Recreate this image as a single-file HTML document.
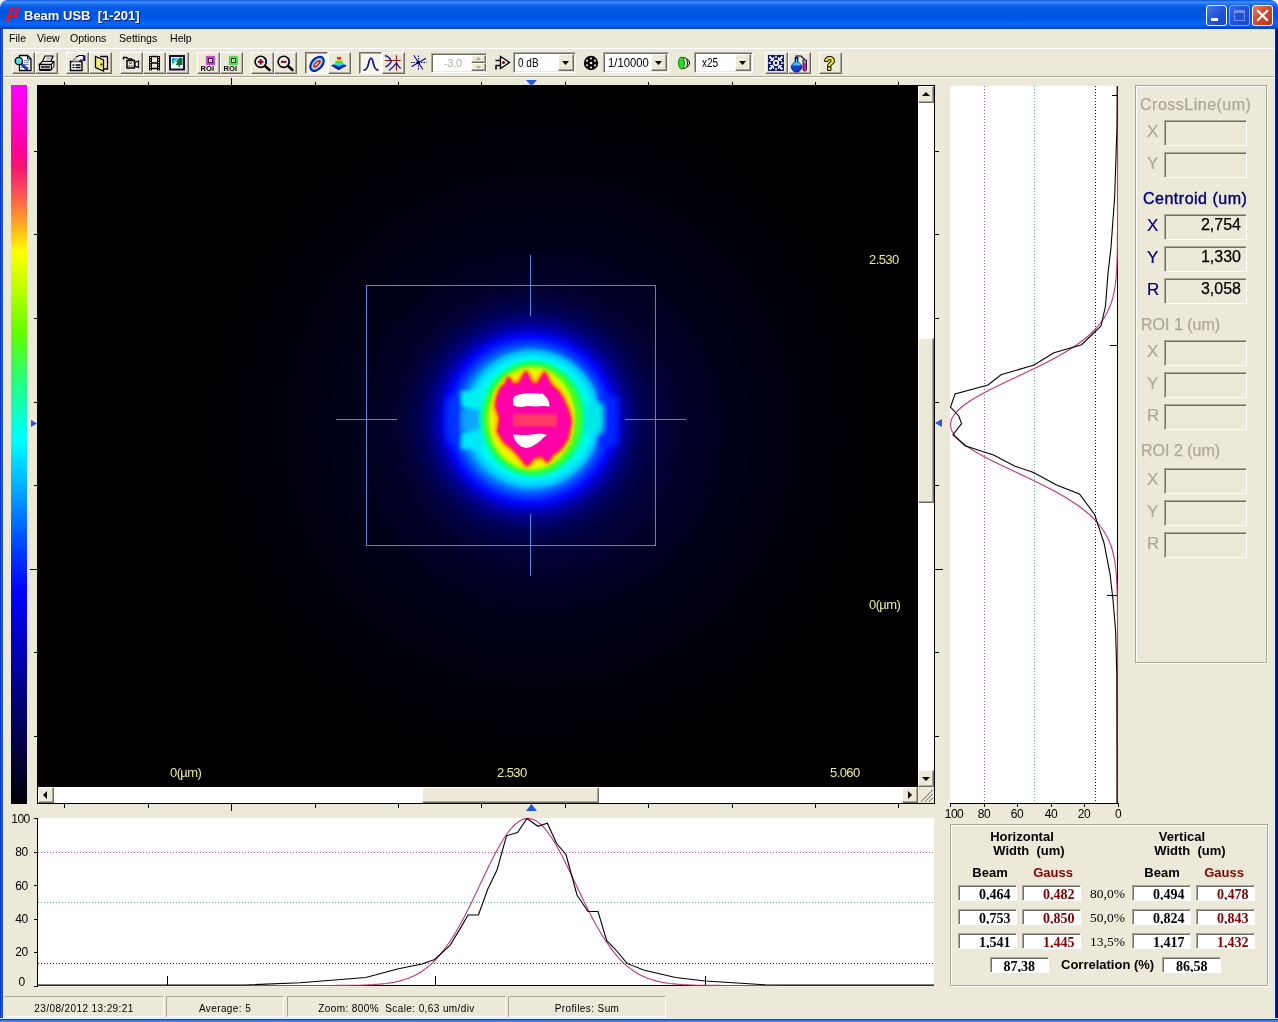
<!DOCTYPE html><html><head><meta charset="utf-8"><title>Beam USB</title><style>*{box-sizing:border-box;margin:0;padding:0}
html,body{width:1278px;height:1022px;overflow:hidden;background:#eef2fa;font-family:"Liberation Sans",sans-serif;}
#win{position:absolute;left:0;top:0;width:1278px;height:1022px;background:#ECE9D8;overflow:hidden;border-radius:7px 7px 0 0;will-change:transform;-webkit-font-smoothing:antialiased}
.abs{position:absolute}
#title{position:absolute;left:0;top:0;width:1278px;height:29px;background:linear-gradient(#0a55d8 0,#2a7cf5 5%,#3a8cff 9%,#1a6cf0 15%,#055ae8 25%,#0055e0 45%,#0058e6 65%,#0366fa 80%,#0362f2 88%,#0048c8 95%,#003ab0 100%);border-radius:7px 7px 0 0}
#title .t{position:absolute;left:24px;top:9px;color:#fff;font-weight:bold;font-size:13px;text-shadow:1px 1px 0 #0a1f80;white-space:pre;line-height:1}
.lb{position:absolute;left:0;top:29px;width:4px;height:993px;background:linear-gradient(90deg,#0034c8 0,#0034c8 25%,#2a60d8 25%,#2a60d8 50%,#1c4ca0 50%,#1c4ca0 75%,#d8ecff 75%)}
.rb{position:absolute;left:1274px;top:29px;width:4px;height:993px;background:linear-gradient(90deg,#e4f0ff 0,#e4f0ff 25%,#0c2080 25%,#0c2080 50%,#021690 50%)}
.bb{position:absolute;left:0;top:1018px;width:1278px;height:4px;background:linear-gradient(#dcf0ff 0,#dcf0ff 25%,#1c4890 25%,#1c4890 50%,#3474dc 50%,#3474dc 75%,#4488e8 75%)}
.menu{position:absolute;top:33px;font-size:11px;color:#000;line-height:1;white-space:pre}
.tb{position:absolute;top:52px;width:23px;height:22px;border:1px solid;border-color:#fff #716f64 #716f64 #fff;box-shadow:inset -1px -1px 0 #aca899;background:#ECE9D8}
.tb.dn{border-color:#716f64 #fff #fff #716f64;box-shadow:inset 1px 1px 0 #aca899;background:#f7f6ef}
.tb svg,.ic svg{position:absolute;left:0;top:0}
.ic{position:absolute;top:52px;width:23px;height:22px}
.sunk{position:absolute;border:1px solid;border-color:#aca899 #fff #fff #aca899;box-shadow:inset 1px 1px 0 #716f64, inset -1px -1px 0 #ece9d8;background:#fff}
.sbtn{position:absolute;border:1px solid;border-color:#fff #716f64 #716f64 #fff;box-shadow:inset -1px -1px 0 #aca899;background:#ECE9D8}
.txt{position:absolute;white-space:pre;line-height:1}
.etch{position:absolute;border:1px solid #aca899;box-shadow:1px 1px 0 #fff, inset 1px 1px 0 #fff}
.ibox{position:absolute;left:1164px;width:83px;height:26px;border:1px solid;border-color:#aca899 #fff #fff #aca899;box-shadow:inset 1px 1px 0 #716f64;background:#ECE9D8;font-size:16px;text-align:right;padding-right:5px;line-height:20px;color:#000;-webkit-text-stroke:.25px #000}
.sp{position:absolute;top:996px;height:21px;border:1px solid;border-color:#aca899 #fff #fff #aca899}
.vb{position:absolute;height:16px;width:59px;border:1px solid;border-color:#aca899 #fff #fff #aca899;box-shadow:inset 1px 1px 0 #716f64;background:#fff;font-family:"Liberation Serif",serif;font-weight:bold;font-size:14px;text-align:right;padding-right:5.5px;line-height:18px;overflow:hidden;color:#000}
.vb.g{color:#800000}
.lab{position:absolute;font-weight:bold;font-size:13px;line-height:1;white-space:pre;color:#000}
.ax{position:absolute;font-size:12px;line-height:1;white-space:pre;color:#000;letter-spacing:-0.5px}
.yl{position:absolute;font-size:13px;line-height:1;white-space:pre;color:#ecec9c;letter-spacing:-0.6px}
</style></head><body><div id="win">
<div id="title"><div class="txt" style="left:8px;top:0px;color:#e8142c;-webkit-text-stroke:.4px #e8142c;font-family:'Liberation Serif',serif;font-style:italic;font-weight:bold;font-size:21px;transform:skewX(-8deg)">µ</div><div class="t">Beam USB  [1-201]</div><div class="abs" style="left:1206px;top:5px;width:21px;height:21px;border:1px solid #fff;border-radius:3px;background:linear-gradient(135deg,#4a7ef0 0,#2456dc 45%,#1a46c8 100%)"><div class="abs" style="left:4px;top:12px;width:7px;height:3px;background:#fff"></div></div><div class="abs" style="left:1229px;top:5px;width:21px;height:21px;border:1px solid #7fa5f0;border-radius:3px;background:linear-gradient(135deg,#3a6ee8 0,#2050d8 50%,#1a48cc 100%)"><div class="abs" style="left:4px;top:4px;width:11px;height:11px;border:1px solid #6b8fe8;border-top:3px solid #6b8fe8"></div></div><div class="abs" style="left:1252px;top:5px;width:21px;height:21px;border:1px solid #fff;border-radius:3px;background:linear-gradient(135deg,#e8805c 0,#d8482a 45%,#c03418 100%)"><svg width="19" height="19" class="abs" style="left:0;top:0"><path d="M5 5 L14 14 M14 5 L5 14" stroke="#fff" stroke-width="2.2" stroke-linecap="square"/></svg></div></div><div class="lb"></div><div class="rb"></div><div class="bb"></div><div class="abs" style="left:4px;top:29px;width:1270px;height:1px;background:#e4ecf8"></div><div class="menu" style="left:8.5px;transform:scaleX(.96);transform-origin:0 0">File</div><div class="menu" style="left:36.8px;transform:scaleX(.96);transform-origin:0 0">View</div><div class="menu" style="left:70.4px;transform:scaleX(.96);transform-origin:0 0">Options</div><div class="menu" style="left:119.3px;transform:scaleX(.96);transform-origin:0 0">Settings</div><div class="menu" style="left:170px;transform:scaleX(.96);transform-origin:0 0">Help</div><div class="abs" style="left:4px;top:48px;width:1270px;height:1px;background:#fff"></div><div class="abs" style="left:4px;top:76px;width:1270px;height:1px;background:#aca899"></div><div class="abs" style="left:4px;top:77px;width:1270px;height:1px;background:#fff"></div>
<div class="tb" style="left:12px"><svg width="21" height="20" viewBox="0 0 21 20"><path d="M6.500 2.500h8l3.500 3.500v11.500h-11.500z" fill="#fff" stroke="#000" stroke-width="1.300"/><path d="M14.500 2.500v3.500h3.500" fill="none" stroke="#000"/><path d="M11 7.500h5M11 9.500h5M11 11.500h5M8 14.500h8" stroke="#8090d8"/><path d="M8 10.500l6.500 6" stroke="#0a2090" stroke-width="3"/><path d="M8.500 10.500l6 5.500" stroke="#4878e8" stroke-width="1"/><circle cx="5.800" cy="8" r="3.700" fill="#48e0e8" stroke="#000" stroke-width="1.200"/></svg></div><div class="tb" style="left:35px"><svg width="21" height="20" viewBox="0 0 21 20"><path d="M6.500 8.500l2.500-5.500h8l-2 5.500" fill="#fff" stroke="#000" stroke-width="1.200"/><path d="M10 5h5.500M9.500 7h5.500" stroke="#444" stroke-width=".6"/><path d="M3.500 11.500l3-3h11l-2 3z" fill="#fff" stroke="#000" stroke-width="1.200"/><path d="M3.500 11.500h12v5h-12z" fill="#fff" stroke="#000" stroke-width="1.300"/><path d="M15.500 11.500l2.500-3v5l-2.500 3z" fill="#e0e0d8" stroke="#000" stroke-width="1"/><path d="M5 14h9" stroke="#000" stroke-width="1.600"/><path d="M3.500 17.500h11" stroke="#000" stroke-width="1"/></svg></div><div class="tb" style="left:66px"><svg width="21" height="20" viewBox="0 0 21 20"><path d="M3.500 8.500h11.500v9h-11.500z" fill="#fff" stroke="#000" stroke-width="1.400"/><path d="M5.500 12h2M8.500 12h5M5.500 14.500h2M8.500 14.500h5" stroke="#000" stroke-width="1.300"/><path d="M5 8.500l4-4.500 4.500 4.500" fill="#c8c8c0" stroke="#000" stroke-dasharray="1 1"/><path d="M9 4l3.500-1.500h4v4.500h-3l-1.500 1.500" fill="#fff" stroke="#000" stroke-width="1.200"/><rect x="16" y="2.500" width="2.500" height="5.500" fill="#10188c"/></svg></div><div class="tb" style="left:89px"><svg width="21" height="20" viewBox="0 0 21 20"><path d="M10 3.500h7.500v12.500h-4" fill="#ece9d8" stroke="#000" stroke-width="1.300"/><path d="M5.500 3.500l8 3.500v11l-8-3.500z" fill="#f4ec78" stroke="#000" stroke-width="1.300"/><rect x="10.500" y="10.500" width="1.800" height="1.800" fill="#000"/></svg></div><div class="tb" style="left:120px"><svg width="21" height="20" viewBox="0 0 21 20"><path d="M6 7.500h7.500v7.500h-7.500z" fill="#ece9d8" stroke="#000" stroke-width="1.500"/><path d="M14 9.500l3.500-1.500v6.500l-3.500-1.500z" fill="#fff" stroke="#000" stroke-width="1.300"/><path d="M2.500 6.500v-2h3l2 1.500h3l2 1.500" stroke="#000" stroke-width="1.400" fill="none"/><path d="M7.500 13h4.500" stroke="#000" stroke-dasharray="1.500 1"/><path d="M8 9.500l1.500 1 1.500-1" stroke="#000" fill="none"/></svg></div><div class="tb" style="left:143px"><svg width="21" height="20" viewBox="0 0 21 20"><path d="M6.500 3v14.500M14.500 3v14.500" stroke="#000" stroke-width="3"/><path d="M6.500 3.500v14" stroke="#ece9d8" stroke-width="1" stroke-dasharray="1 1.500" stroke-dashoffset="-.5"/><path d="M14.500 3.500v14" stroke="#ece9d8" stroke-width="1" stroke-dasharray="1 1.500" stroke-dashoffset="-.5"/><path d="M7 3.500h7M7 10h7M7 15.500h7" stroke="#000" stroke-width="1.300"/></svg></div><div class="tb" style="left:166px"><svg width="21" height="20" viewBox="0 0 21 20"><rect x="2" y="2" width="16" height="15.500" fill="#1c0838"/><rect x="4" y="4" width="12" height="11.500" fill="#fff"/><rect x="5" y="5" width="10" height="9" fill="#fff"/><path d="M5 5h7l-7 7z" fill="#30c8e0"/><path d="M5 5l0 5 3-5z" fill="#1890b0"/><path d="M12.500 4.500l-3.500 4.500h1.500l-2 3h3v2h1.500v-2h2.500v-7z" fill="#0a7030"/></svg></div><div class="tb" style="left:197px"><svg width="21" height="20" viewBox="0 0 21 20"><rect x="8.500" y="3.500" width="8" height="8" fill="#d030d8" stroke="#b018c0" stroke-width="1.400" stroke-dasharray="1 1"/><rect x="9" y="4" width="7" height="7" fill="#d030d8"/><rect x="10.500" y="5.500" width="4" height="4" fill="#f8f0c0" stroke="#500858" stroke-width="1"/><rect x="12" y="7" width="1" height="1" fill="#806000"/><text x="2.500" y="17.700" font-family="Liberation Sans,sans-serif" font-weight="bold" font-size="6.800" fill="#000" textLength="13.500" lengthAdjust="spacingAndGlyphs">ROI</text></svg></div><div class="tb" style="left:220px"><svg width="21" height="20" viewBox="0 0 21 20"><rect x="8.500" y="3.500" width="8" height="8" fill="#40e848" stroke="#20c020" stroke-width="1.400" stroke-dasharray="1 1"/><rect x="9" y="4" width="7" height="7" fill="#40e848"/><rect x="10.500" y="5.500" width="4" height="4" fill="#f8f0c0" stroke="#104010" stroke-width="1"/><rect x="12" y="7" width="1" height="1" fill="#806000"/><text x="2.500" y="17.700" font-family="Liberation Sans,sans-serif" font-weight="bold" font-size="6.800" fill="#000" textLength="13.500" lengthAdjust="spacingAndGlyphs">ROI</text></svg></div><div class="tb" style="left:251px"><svg width="21" height="20" viewBox="0 0 21 20"><circle cx="8.700" cy="8.800" r="5.600" fill="#f4ece4" stroke="#000" stroke-width="1.600"/><path d="M12.300 4.800a5.600 5.600 0 0 1 1.600 6" fill="none" stroke="#101070" stroke-width="1.600"/><path d="M6 8.800h5.400" stroke="#880010" stroke-width="2"/><path d="M8.700 6.100v5.400" stroke="#880010" stroke-width="2"/><path d="M13 13l4.500 4" stroke="#000" stroke-width="2.600" stroke-linecap="round"/></svg></div><div class="tb" style="left:274px"><svg width="21" height="20" viewBox="0 0 21 20"><circle cx="8.700" cy="8.800" r="5.600" fill="#f4ece4" stroke="#000" stroke-width="1.600"/><path d="M12.300 4.800a5.600 5.600 0 0 1 1.600 6" fill="none" stroke="#101070" stroke-width="1.600"/><path d="M6 8.800h5.400" stroke="#880010" stroke-width="2"/><path d="M13 13l4.500 4" stroke="#000" stroke-width="2.600" stroke-linecap="round"/></svg></div><div class="tb dn" style="left:305px"><svg width="21" height="20" viewBox="0 0 21 20"><g transform="rotate(-48 11 10.800)"><ellipse cx="11" cy="10.800" rx="9.300" ry="6.300" fill="#0c20b0"/><ellipse cx="11" cy="10.800" rx="7.200" ry="4.300" fill="#40c8e8"/><ellipse cx="11" cy="10.800" rx="6" ry="3.200" fill="#f0f0e0"/><ellipse cx="11" cy="10.800" rx="5" ry="2.300" fill="#d81828"/><ellipse cx="11" cy="10.800" rx="2.800" ry=".7" fill="#f8e8e0"/></g></svg></div><div class="tb" style="left:328px"><svg width="21" height="20" viewBox="0 0 21 20"><path d="M2 12.500l8-3 8 3-8.500 4.700z" fill="#0c1c90"/><path d="M4 12.200l6-2.200 6 2.200-6 2.300z" fill="#2048e8"/><path d="M5 11.500l1-2h8l1 2-5 1.800z" fill="#28d8d8"/><path d="M6 9.500l1-2h6l1 2-4 1z" fill="#40e040"/><path d="M7 7.500l1-1.500h4l1 1.500-3 .8z" fill="#f0e828"/><path d="M8 6v-2.500l2 1 2-1v2.500l-2 .7z" fill="#e82028"/></svg></div><div class="tb dn" style="left:359px"><svg width="21" height="20" viewBox="0 0 21 20"><path d="M3.500 17.200c3-.5 4-2 5-6.500s1.500-5.500 2.500-5.500 1.500 1 2.500 5.500 2 6 5 6.500" fill="none" stroke="#0a1488" stroke-width="1.700"/></svg></div><div class="tb" style="left:382px"><svg width="21" height="20" viewBox="0 0 21 20"><path d="M1.800 7.500h16M13.400 2.200v15.500" stroke="#a81010" stroke-width="1.100"/><path d="M2 2.500C6 4 8 6 8 8.500C8 10.500 5 12.500 2.500 14M6 17.500C9 15 12 12.500 13.400 10C14.500 12 16 14 17.700 15.500" fill="none" stroke="#1420a0" stroke-width="1.500"/></svg></div><div class="tb" style="left:765px"><svg width="21" height="20" viewBox="0 0 21 20"><rect x="2" y="2" width="16" height="16" fill="#0c1478"/><g stroke="#fff" fill="none"><circle cx="10" cy="10" r="2.300" stroke-width="1.700"/><path d="M3.500 3.500l3.800 3.800M16.500 3.500l-3.800 3.800M3.500 16.500l3.800-3.800M16.500 16.500l-3.800-3.800" stroke-width="1.800"/><path d="M4 7.500h2.500M7.500 4v2.500M16 7.500h-2.500M12.500 4v2.500M4 12.500h2.500M7.500 16v-2.500M16 12.500h-2.500M12.500 16v-2.500" stroke-width="1.200"/><path d="M10 2.500v2.500M10 15v2.500M2.500 10h2.500M15 10h2.500" stroke-width="1.400"/></g></svg></div><div class="tb" style="left:788px"><svg width="21" height="20" viewBox="0 0 21 20"><path d="M6.300 4v5.200a5 5 0 1 0 2.400 0v-5.200z" fill="#1440d0" stroke="#081060" stroke-width="1"/><path d="M3 12.500a4.600 4.600 0 0 1 3.300-3.300v-3.200h2.400v3.200a4.600 4.600 0 0 1 3.300 3.300z" fill="#30c8f0"/><path d="M6.300 4v5.200M8.700 4v5.200" stroke="#081060" stroke-width="1"/><path d="M6.500 3h5.500l4 4" fill="none" stroke="#000" stroke-width="1.200"/><path d="M14 7h3.500v9.300a1.750 1.750 0 0 1-3.500 0z" fill="#d020b0" stroke="#300838" stroke-width="1"/><path d="M14.500 7.500h2.500v2.500h-2.500z" fill="#9090c0"/></svg></div><div class="tb" style="left:819px"><svg width="21" height="20" viewBox="0 0 21 20"><text x="9.500" y="16.500" font-family="Liberation Sans,sans-serif" font-weight="bold" font-size="17.500" text-anchor="middle" fill="#f4ec30" stroke="#000" stroke-width="2" stroke-linejoin="round" paint-order="stroke">?</text></svg></div><div class="ic" style="left:408px"><div class="abs" style="left:1px;top:1px"><svg width="21" height="20" viewBox="0 0 21 20"><path d="M2 9.500h15.500M9.500 2.500v14.500" stroke="#080878" stroke-width="1.100" stroke-dasharray="1.500 1"/><path d="M4.800 2.300l9 14.200M17 5.200l-14.600 8.500" stroke="#080878" stroke-width="1.100"/><rect x="8" y="8" width="3" height="3" fill="#080860"/></svg></div></div><div class="ic" style="left:492px"><div class="abs" style="left:1px;top:1px"><svg width="21" height="20" viewBox="0 0 21 20"><path d="M7.500 3.500v12l9-6z" fill="#fff" stroke="#000" stroke-width="1.400"/><circle cx="10.500" cy="9.500" r="1.600" fill="#900010"/><path d="M2.500 7.500h5M2.500 12.500h5M3 12.500v4" stroke="#000" stroke-width="1.600"/></svg></div></div><div class="ic" style="left:580px"><div class="abs" style="left:1px;top:1px"><svg width="21" height="20" viewBox="0 0 21 20"><circle cx="10" cy="10" r="7.200" fill="#000"/><g fill="#ece9d8"><circle cx="10" cy="10" r="1.300"/><circle cx="10" cy="5.500" r="1.100"/><circle cx="10" cy="14.500" r="1.100"/><circle cx="6" cy="7.700" r="1.100"/><circle cx="14" cy="7.700" r="1.100"/><circle cx="6" cy="12.300" r="1.100"/><circle cx="14" cy="12.300" r="1.100"/></g></svg></div></div><div class="ic" style="left:673px"><div class="abs" style="left:1px;top:1px"><svg width="21" height="20" viewBox="0 0 21 20"><path d="M8 4.500c5 0 7.500 3 7.500 5.500s-2.500 5.500-7.500 5.500" fill="#e8e8d8" stroke="#000"/><ellipse cx="7.500" cy="10" rx="3" ry="6" fill="#28d828" stroke="#108010"/><path d="M12.500 6.500c1.500 2 1.500 5 0 7" fill="none" stroke="#000"/></svg></div></div><div class="sunk" style="left:431px;top:53px;width:56px;height:20px"></div><div class="txt" style="left:444px;top:58px;font-size:11px;letter-spacing:-.3px;color:#b4b0a0">-3,0</div><div class="sbtn" style="left:471px;top:55px;width:15px;height:8px"></div><div class="sbtn" style="left:471px;top:63px;width:15px;height:8px"></div><svg class="abs" style="left:476px;top:57px" width="5" height="3"><path d="M0 3l2.500-3 2.500 3z" fill="#aca899"/></svg><svg class="abs" style="left:476px;top:66px" width="5" height="3"><path d="M0 0h5l-2.500 3z" fill="#aca899"/></svg><div class="sunk" style="left:513px;top:52px;width:63px;height:21px"></div><div class="txt" style="left:518px;top:57px;font-size:12.500px;color:#000;transform:scaleX(0.8);transform-origin:0 0">0 dB</div><div class="sbtn" style="left:558px;top:54px;width:16px;height:17px"></div><svg class="abs" style="left:562px;top:61px" width="7" height="4"><path d="M0 0h7l-3.500 4z" fill="#000"/></svg><div class="sunk" style="left:603px;top:52px;width:66px;height:21px"></div><div class="txt" style="left:608px;top:57px;font-size:12.500px;color:#000;transform:scaleX(0.9);transform-origin:0 0">1/10000</div><div class="sbtn" style="left:651px;top:54px;width:16px;height:17px"></div><svg class="abs" style="left:655px;top:61px" width="7" height="4"><path d="M0 0h7l-3.500 4z" fill="#000"/></svg><div class="sunk" style="left:694px;top:52px;width:59px;height:21px"></div><div class="txt" style="left:702px;top:57px;font-size:12.500px;color:#000;transform:scaleX(0.8);transform-origin:0 0">x25</div><div class="sbtn" style="left:735px;top:54px;width:16px;height:17px"></div><svg class="abs" style="left:739px;top:61px" width="7" height="4"><path d="M0 0h7l-3.500 4z" fill="#000"/></svg>
<div class="abs" style="left:11px;top:85px;width:16px;height:719px;background:linear-gradient(#ff00ff 0.00%,#ff00d0 4.87%,#ff0098 9.04%,#f41870 11.54%,#fa5058 15.02%,#ffa028 18.92%,#ffff00 23.23%,#b8ff00 28.65%,#60ff00 34.63%,#28ff78 40.89%,#00fff0 48.26%,#00ffff 49.37%,#00c0ff 54.38%,#0080ff 59.39%,#0040ff 64.53%,#0000ff 70.51%,#0000c0 77.61%,#000080 84.70%,#000040 92.21%,#00000c 99.30%,#000008 100.00%)"></div><div class="abs" style="left:37px;top:85px;width:898px;height:719px;background:#000"></div><svg class="abs" style="left:38px;top:86px" width="880" height="701" viewBox="0 0 880 701"><defs><radialGradient id="halo" cx="502" cy="344" r="360" gradientUnits="userSpaceOnUse"><stop offset="0" stop-color="#000060"/><stop offset=".3" stop-color="#000040"/><stop offset=".4" stop-color="#00002a"/><stop offset=".52" stop-color="#00001a"/><stop offset=".7" stop-color="#00000e"/><stop offset=".85" stop-color="#000006"/><stop offset="1" stop-color="#000000"/></radialGradient><radialGradient id="beam" cx="492" cy="334" r="140" gradientUnits="userSpaceOnUse"><stop offset="0.0000" stop-color="#00c8ff" stop-opacity="1"/><stop offset="0.4286" stop-color="#00c0ff" stop-opacity="1"/><stop offset="0.4857" stop-color="#0090ff" stop-opacity="1"/><stop offset="0.5429" stop-color="#0040ff" stop-opacity="1"/><stop offset="0.5929" stop-color="#0008ff" stop-opacity="1"/><stop offset="0.6429" stop-color="#0000c0" stop-opacity="1"/><stop offset="0.7000" stop-color="#00008c" stop-opacity="0.95"/><stop offset="0.7714" stop-color="#000064" stop-opacity="0.85"/><stop offset="0.8714" stop-color="#000048" stop-opacity="0.5"/><stop offset="1.0000" stop-color="#000038" stop-opacity="0"/></radialGradient><radialGradient id="gc"><stop offset="0" stop-color="#00ffb0" stop-opacity="1"/><stop offset="0.74" stop-color="#00ffc8" stop-opacity="1"/><stop offset="0.84" stop-color="#00f4f8" stop-opacity="1"/><stop offset="0.93" stop-color="#00d0ff" stop-opacity="0.8"/><stop offset="1" stop-color="#00a8ff" stop-opacity="0"/></radialGradient><radialGradient id="gg"><stop offset="0" stop-color="#58ff18" stop-opacity="1"/><stop offset="0.86" stop-color="#48ff20" stop-opacity="1"/><stop offset="0.93" stop-color="#10ff70" stop-opacity="0.9"/><stop offset="1" stop-color="#00ffb0" stop-opacity="0"/></radialGradient><radialGradient id="gy"><stop offset="0" stop-color="#ffd800" stop-opacity="1"/><stop offset="0.84" stop-color="#fff000" stop-opacity="1"/><stop offset="0.92" stop-color="#d0ff00" stop-opacity="0.9"/><stop offset="1" stop-color="#80ff10" stop-opacity="0"/></radialGradient><filter id="b2"><feGaussianBlur stdDeviation="2"/></filter><filter id="b1"><feGaussianBlur stdDeviation="1.200"/></filter><filter id="b3"><feGaussianBlur stdDeviation="3"/></filter></defs><rect width="880" height="701" fill="url(#halo)"/><circle cx="492" cy="334" r="140" fill="url(#beam)"/><rect x="408.0" y="312.0" width="24.0" height="44.0" fill="#0030ff" filter="url(#b3)" opacity="0.9"/><rect x="558.0" y="310.0" width="22.0" height="50.0" fill="#0028ff" filter="url(#b3)" opacity="0.9"/><ellipse cx="494.5" cy="333.0" rx="71.0" ry="72.0" fill="url(#gc)" /><rect x="423.0" y="305.0" width="22.0" height="17.0" fill="#00f0f0" filter="url(#b2)" opacity="1"/><rect x="423.0" y="346.0" width="22.0" height="17.0" fill="#00e8f8" filter="url(#b2)" opacity="1"/><rect x="422.0" y="323.0" width="20.0" height="22.0" fill="#10a0ff" filter="url(#b2)" opacity="0.9"/><rect x="544.0" y="317.0" width="22.0" height="30.0" fill="#00e8e8" filter="url(#b3)" opacity="0.95"/><ellipse cx="494.8" cy="332.5" rx="54.0" ry="60.5" fill="url(#gg)" /><ellipse cx="493.5" cy="332.5" rx="46.0" ry="54.0" fill="url(#gy)" /><path d="M459.5 312.3L463.4 302.5L468.3 298.6L470.3 292.7L474.2 298.6L481.0 298.6L487.9 286.8L493.8 298.6L499.6 298.6L506.5 287.8L512.4 299.6L519.2 305.4L525.0 314.2L530.0 326.0L532.0 335.8L529.0 351.4L523.0 361.2L513.3 369.0L509.4 374.9L503.5 369.0L495.7 371.0L488.9 378.8L483.0 371.0L476.1 363.2L466.4 355.3L460.5 345.5L462.5 331.8L458.5 320.1Z" fill="#ff9000" stroke="#ff9000" stroke-width="7" stroke-linejoin="round" filter="url(#b2)"/><path d="M459.5 312.3L463.4 302.5L468.3 298.6L470.3 292.7L474.2 298.6L481.0 298.6L487.9 286.8L493.8 298.6L499.6 298.6L506.5 287.8L512.4 299.6L519.2 305.4L525.0 314.2L530.0 326.0L532.0 335.8L529.0 351.4L523.0 361.2L513.3 369.0L509.4 374.9L503.5 369.0L495.7 371.0L488.9 378.8L483.0 371.0L476.1 363.2L466.4 355.3L460.5 345.5L462.5 331.8L458.5 320.1Z" fill="#ff2050" stroke="#ff2050" stroke-width="3" stroke-linejoin="round" filter="url(#b1)"/><path d="M459.5 312.3L463.4 302.5L468.3 298.6L470.3 292.7L474.2 298.6L481.0 298.6L487.9 286.8L493.8 298.6L499.6 298.6L506.5 287.8L512.4 299.6L519.2 305.4L525.0 314.2L530.0 326.0L532.0 335.8L529.0 351.4L523.0 361.2L513.3 369.0L509.4 374.9L503.5 369.0L495.7 371.0L488.9 378.8L483.0 371.0L476.1 363.2L466.4 355.3L460.5 345.5L462.5 331.8L458.5 320.1Z" fill="#ff00a8" filter="url(#b1)"/><rect x="475.0" y="328.0" width="44.0" height="12.5" fill="#ff3868" filter="url(#b1)" opacity="1"/><path d="M475.0 313.0L477.0 310.0L481.0 308.5L486.0 307.4L493.0 307.2L500.0 307.4L503.0 308.0L504.0 307.0L506.0 309.0L509.0 312.0L511.0 316.0L511.5 320.5L505.0 320.0L498.0 320.5L490.0 320.0L483.0 321.0L478.0 320.5L475.0 318.5Z" fill="#fff"/><path d="M475.0 348.5L482.0 349.0L490.0 349.0L498.0 348.0L503.0 347.5L509.0 349.0L505.0 352.0L502.0 355.0L498.0 358.0L493.0 361.0L488.0 362.0L483.0 360.5L479.0 357.0L476.5 353.0Z" fill="#fff"/><g stroke="#4a88e0" stroke-width="1" fill="none" shape-rendering="crispEdges"><rect x="328.5" y="199.5" width="289" height="260"/><path d="M492.5 169 V230 M492.5 428 V490 M298 333.5 H359 M587 333.5 H648"/></g></svg><div class="yl" style="left:170px;top:766px">0(µm)</div><div class="yl" style="left:497px;top:766px">2.530</div><div class="yl" style="left:830px;top:766px">5.060</div><div class="yl" style="left:869px;top:253px">2.530</div><div class="yl" style="left:869px;top:598px">0(µm)</div><div class="abs" style="left:918px;top:86px;width:16px;height:701px;background:#fff"></div><div class="sbtn" style="left:918px;top:86px;width:16px;height:17px"></div><svg class="abs" style="left:922px;top:92px" width="8" height="4"><path d="M0 4l4-4 4 4z" fill="#000"/></svg><div class="sbtn" style="left:918px;top:770px;width:16px;height:17px"></div><svg class="abs" style="left:922px;top:777px" width="8" height="4"><path d="M0 0h8l-4 4z" fill="#000"/></svg><div class="sbtn" style="left:918px;top:338px;width:16px;height:165px"></div><div class="abs" style="left:38px;top:787px;width:880px;height:16px;background:#fff"></div><div class="sbtn" style="left:38px;top:787px;width:16px;height:16px"></div><svg class="abs" style="left:43px;top:791px" width="4" height="8"><path d="M4 0v8l-4-4z" fill="#000"/></svg><div class="sbtn" style="left:902px;top:787px;width:16px;height:16px"></div><svg class="abs" style="left:908px;top:791px" width="4" height="8"><path d="M0 0v8l4-4z" fill="#000"/></svg><div class="sbtn" style="left:422px;top:787px;width:177px;height:16px"></div><div class="abs" style="left:918px;top:787px;width:16px;height:16px;background:#ECE9D8"></div><svg class="abs" style="left:918px;top:787px" width="16" height="16"><path d="M3 15L15 3M7 15L15 7M11 15L15 11" stroke="#8a887c" stroke-width="1.400"/><path d="M4 15L15 4M8 15L15 8M12 15L15 12" stroke="#fff" stroke-width=".8"/></svg><svg class="abs" style="left:0;top:0;pointer-events:none" width="1278" height="1022"><rect x="64" y="82" width="1" height="3" fill="#000"/><rect x="64" y="804" width="1" height="4" fill="#000"/><rect x="34" y="151" width="3" height="1" fill="#000"/><rect x="935" y="151" width="4" height="1" fill="#000"/><rect x="148" y="82" width="1" height="3" fill="#000"/><rect x="148" y="804" width="1" height="4" fill="#000"/><rect x="34" y="234" width="3" height="1" fill="#000"/><rect x="935" y="234" width="4" height="1" fill="#000"/><rect x="231" y="78" width="1" height="7" fill="#000"/><rect x="231" y="804" width="1" height="7" fill="#000"/><rect x="34" y="318" width="3" height="1" fill="#000"/><rect x="935" y="318" width="4" height="1" fill="#000"/><rect x="315" y="82" width="1" height="3" fill="#000"/><rect x="315" y="804" width="1" height="4" fill="#000"/><rect x="34" y="402" width="3" height="1" fill="#000"/><rect x="935" y="402" width="4" height="1" fill="#000"/><rect x="398" y="82" width="1" height="3" fill="#000"/><rect x="398" y="804" width="1" height="4" fill="#000"/><rect x="34" y="485" width="3" height="1" fill="#000"/><rect x="935" y="485" width="4" height="1" fill="#000"/><rect x="481" y="82" width="1" height="3" fill="#000"/><rect x="481" y="804" width="1" height="4" fill="#000"/><rect x="30" y="569" width="7" height="1" fill="#000"/><rect x="935" y="569" width="8" height="1" fill="#000"/><rect x="565" y="82" width="1" height="3" fill="#000"/><rect x="565" y="804" width="1" height="4" fill="#000"/><rect x="34" y="652" width="3" height="1" fill="#000"/><rect x="935" y="652" width="4" height="1" fill="#000"/><rect x="648" y="82" width="1" height="3" fill="#000"/><rect x="648" y="804" width="1" height="4" fill="#000"/><rect x="34" y="736" width="3" height="1" fill="#000"/><rect x="935" y="736" width="4" height="1" fill="#000"/><rect x="732" y="82" width="1" height="3" fill="#000"/><rect x="732" y="804" width="1" height="4" fill="#000"/><rect x="815" y="82" width="1" height="3" fill="#000"/><rect x="815" y="804" width="1" height="4" fill="#000"/><rect x="898" y="82" width="1" height="3" fill="#000"/><rect x="898" y="804" width="1" height="4" fill="#000"/><path d="M526 80h11l-5.500 6z" fill="#2858d8"/><path d="M526 811h11l-5.500 -7z" fill="#2858d8"/><path d="M31 420v7l6 -3.500z" fill="#2858d8"/><path d="M942 419v8l-7 -4z" fill="#2858d8"/></svg>
<div class="abs" style="left:950px;top:86px;width:168px;height:717px;background:#fff"></div><svg class="abs" style="left:0;top:0" width="1278" height="1022"><path d="M984.5 86V803" stroke="#b050a0" stroke-width="1" stroke-dasharray="1 2" shape-rendering="crispEdges"/><path d="M1034.5 86V803" stroke="#58b078" stroke-width="1" stroke-dasharray="1 2" shape-rendering="crispEdges"/><path d="M1095.5 86V803" stroke="#202020" stroke-width="1" stroke-dasharray="1 2" shape-rendering="crispEdges"/><path d="M1117.500 86V803M950 803.500H1118" stroke="#000" stroke-width="1" shape-rendering="crispEdges"/><path d="M1112 95.500h6M1110 345.500h8M1107 595.500h11" stroke="#000" shape-rendering="crispEdges"/><path d="M950.5 803v4" stroke="#000" shape-rendering="crispEdges"/><path d="M984.5 803v4" stroke="#000" shape-rendering="crispEdges"/><path d="M1017.5 803v4" stroke="#000" shape-rendering="crispEdges"/><path d="M1051.5 803v4" stroke="#000" shape-rendering="crispEdges"/><path d="M1084.5 803v4" stroke="#000" shape-rendering="crispEdges"/><path d="M1118.5 803v4" stroke="#000" shape-rendering="crispEdges"/><path d="M1117.5 86.0L1117.5 88.0L1117.5 90.0L1117.5 92.0L1117.5 94.0L1117.5 96.0L1117.5 98.0L1117.5 100.0L1117.5 102.0L1117.5 104.0L1117.5 106.0L1117.5 108.0L1117.5 110.0L1117.5 112.0L1117.5 114.0L1117.5 116.0L1117.5 118.0L1117.5 120.0L1117.5 122.0L1117.5 124.0L1117.5 126.0L1117.5 128.0L1117.5 130.0L1117.5 132.0L1117.5 134.0L1117.5 136.0L1117.5 138.0L1117.5 140.0L1117.5 142.0L1117.5 144.0L1117.5 146.0L1117.5 148.0L1117.5 150.0L1117.5 152.0L1117.5 154.0L1117.5 156.0L1117.5 158.0L1117.5 160.0L1117.5 162.0L1117.5 164.0L1117.5 166.0L1117.5 168.0L1117.5 170.0L1117.5 172.0L1117.5 174.0L1117.5 176.0L1117.5 178.0L1117.5 180.0L1117.5 182.0L1117.5 184.0L1117.5 186.0L1117.5 188.0L1117.5 190.0L1117.5 192.0L1117.5 194.0L1117.5 196.0L1117.5 198.0L1117.5 200.0L1117.5 202.0L1117.5 204.0L1117.5 206.0L1117.5 208.0L1117.5 210.0L1117.5 212.0L1117.5 214.0L1117.5 216.0L1117.5 218.0L1117.5 220.0L1117.5 222.0L1117.5 224.0L1117.5 226.0L1117.5 228.0L1117.5 230.0L1117.5 232.0L1117.4 234.0L1117.4 236.0L1117.4 238.0L1117.4 240.0L1117.4 242.0L1117.4 244.0L1117.4 246.0L1117.3 248.0L1117.3 250.0L1117.3 252.0L1117.2 254.0L1117.2 256.0L1117.1 258.0L1117.1 260.0L1117.0 262.0L1116.9 264.0L1116.9 266.0L1116.8 268.0L1116.7 270.0L1116.5 272.0L1116.4 274.0L1116.2 276.0L1116.1 278.0L1115.9 280.0L1115.6 282.0L1115.4 284.0L1115.1 286.0L1114.8 288.0L1114.5 290.0L1114.1 292.0L1113.6 294.0L1113.2 296.0L1112.7 298.0L1112.1 300.0L1111.5 302.0L1110.8 304.0L1110.0 306.0L1109.2 308.0L1108.3 310.0L1107.4 312.0L1106.3 314.0L1105.2 316.0L1104.0 318.0L1102.6 320.0L1101.2 322.0L1099.7 324.0L1098.0 326.0L1096.3 328.0L1094.4 330.0L1092.4 332.0L1090.3 334.0L1088.1 336.0L1085.7 338.0L1083.2 340.0L1080.6 342.0L1077.8 344.0L1074.9 346.0L1071.9 348.0L1068.8 350.0L1065.5 352.0L1062.1 354.0L1058.6 356.0L1054.9 358.0L1051.2 360.0L1047.4 362.0L1043.4 364.0L1039.4 366.0L1035.4 368.0L1031.2 370.0L1027.0 372.0L1022.8 374.0L1018.5 376.0L1014.3 378.0L1010.0 380.0L1005.8 382.0L1001.6 384.0L997.5 386.0L993.4 388.0L989.5 390.0L985.6 392.0L981.9 394.0L978.3 396.0L974.8 398.0L971.5 400.0L968.5 402.0L965.6 404.0L962.9 406.0L960.5 408.0L958.3 410.0L956.3 412.0L954.7 414.0L953.3 416.0L952.1 418.0L951.3 420.0L950.8 422.0L950.5 424.0L950.6 426.0L950.9 428.0L951.5 430.0L952.5 432.0L953.7 434.0L955.1 436.0L956.9 438.0L958.9 440.0L961.2 442.0L963.7 444.0L966.4 446.0L969.4 448.0L972.5 450.0L975.8 452.0L979.3 454.0L983.0 456.0L986.7 458.0L990.6 460.0L994.6 462.0L998.7 464.0L1002.9 466.0L1007.1 468.0L1011.3 470.0L1015.6 472.0L1019.8 474.0L1024.1 476.0L1028.3 478.0L1032.5 480.0L1036.6 482.0L1040.6 484.0L1044.6 486.0L1048.5 488.0L1052.3 490.0L1056.0 492.0L1059.6 494.0L1063.1 496.0L1066.5 498.0L1069.7 500.0L1072.8 502.0L1075.8 504.0L1078.7 506.0L1081.4 508.0L1084.0 510.0L1086.4 512.0L1088.8 514.0L1091.0 516.0L1093.0 518.0L1095.0 520.0L1096.8 522.0L1098.5 524.0L1100.2 526.0L1101.6 528.0L1103.0 530.0L1104.3 532.0L1105.5 534.0L1106.6 536.0L1107.7 538.0L1108.6 540.0L1109.5 542.0L1110.3 544.0L1111.0 546.0L1111.7 548.0L1112.3 550.0L1112.8 552.0L1113.3 554.0L1113.8 556.0L1114.2 558.0L1114.6 560.0L1114.9 562.0L1115.2 564.0L1115.5 566.0L1115.7 568.0L1115.9 570.0L1116.1 572.0L1116.3 574.0L1116.4 576.0L1116.6 578.0L1116.7 580.0L1116.8 582.0L1116.9 584.0L1117.0 586.0L1117.0 588.0L1117.1 590.0L1117.2 592.0L1117.2 594.0L1117.2 596.0L1117.3 598.0L1117.3 600.0L1117.3 602.0L1117.4 604.0L1117.4 606.0L1117.4 608.0L1117.4 610.0L1117.4 612.0L1117.4 614.0L1117.4 616.0L1117.5 618.0L1117.5 620.0L1117.5 622.0L1117.5 624.0L1117.5 626.0L1117.5 628.0L1117.5 630.0L1117.5 632.0L1117.5 634.0L1117.5 636.0L1117.5 638.0L1117.5 640.0L1117.5 642.0L1117.5 644.0L1117.5 646.0L1117.5 648.0L1117.5 650.0L1117.5 652.0L1117.5 654.0L1117.5 656.0L1117.5 658.0L1117.5 660.0L1117.5 662.0L1117.5 664.0L1117.5 666.0L1117.5 668.0L1117.5 670.0L1117.5 672.0L1117.5 674.0L1117.5 676.0L1117.5 678.0L1117.5 680.0L1117.5 682.0L1117.5 684.0L1117.5 686.0L1117.5 688.0L1117.5 690.0L1117.5 692.0L1117.5 694.0L1117.5 696.0L1117.5 698.0L1117.5 700.0L1117.5 702.0L1117.5 704.0L1117.5 706.0L1117.5 708.0L1117.5 710.0L1117.5 712.0L1117.5 714.0L1117.5 716.0L1117.5 718.0L1117.5 720.0L1117.5 722.0L1117.5 724.0L1117.5 726.0L1117.5 728.0L1117.5 730.0L1117.5 732.0L1117.5 734.0L1117.5 736.0L1117.5 738.0L1117.5 740.0L1117.5 742.0L1117.5 744.0L1117.5 746.0L1117.5 748.0L1117.5 750.0L1117.5 752.0L1117.5 754.0L1117.5 756.0L1117.5 758.0L1117.5 760.0L1117.5 762.0L1117.5 764.0L1117.5 766.0L1117.5 768.0L1117.5 770.0L1117.5 772.0L1117.5 774.0L1117.5 776.0L1117.5 778.0L1117.5 780.0L1117.5 782.0L1117.5 784.0L1117.5 786.0L1117.5 788.0L1117.5 790.0L1117.5 792.0L1117.5 794.0L1117.5 796.0L1117.5 798.0L1117.5 800.0L1117.5 802.0" fill="none" stroke="#b83880" stroke-width="1.100"/><path d="M1117.2 86.0L1117.0 126.0L1114.7 196.0L1111.0 247.5L1108.0 273.0L1105.5 306.0L1101.0 326.0L1081.6 344.7L1054.0 352.8L1034.0 365.0L1001.0 374.8L988.0 385.0L955.0 394.0L950.5 407.0L958.7 416.0L961.6 423.6L953.0 434.6L959.0 440.0L965.0 445.7L993.5 455.0L1014.5 466.0L1033.6 472.4L1056.5 485.0L1079.4 494.0L1094.6 514.4L1104.0 543.0L1110.0 573.6L1113.0 600.0L1115.6 631.0L1116.8 674.7L1117.0 803.0" fill="none" stroke="#000" stroke-width="1.100"/></svg><div class="ax" style="left:939px;top:808px;width:30px;text-align:center">100</div><div class="ax" style="left:969px;top:808px;width:30px;text-align:center">80</div><div class="ax" style="left:1002px;top:808px;width:30px;text-align:center">60</div><div class="ax" style="left:1036px;top:808px;width:30px;text-align:center">40</div><div class="ax" style="left:1069px;top:808px;width:30px;text-align:center">20</div><div class="ax" style="left:1103px;top:808px;width:30px;text-align:center">0</div>
<div class="etch" style="left:1135px;top:85px;width:132px;height:578px"></div><div class="txt" style="left:1140px;top:97px;font-size:16px;letter-spacing:0.5px;color:#aca899;-webkit-text-stroke:.25px #aca899;">CrossLine(um)</div><div class="txt" style="left:1147px;top:123px;font-size:17px;-webkit-text-stroke:.2px #aca899;color:#aca899">X</div><div class="ibox" style="top:120px"></div><div class="txt" style="left:1147px;top:155px;font-size:17px;-webkit-text-stroke:.2px #aca899;color:#aca899">Y</div><div class="ibox" style="top:152px"></div><div class="txt" style="left:1143px;top:191px;font-size:16px;letter-spacing:0.5px;color:#00007c;-webkit-text-stroke:.4px #00007c;">Centroid (um)</div><div class="txt" style="left:1147px;top:217px;font-size:17px;-webkit-text-stroke:.2px #00007c;color:#00007c">X</div><div class="ibox" style="top:214px">2,754</div><div class="txt" style="left:1147px;top:249px;font-size:17px;-webkit-text-stroke:.2px #00007c;color:#00007c">Y</div><div class="ibox" style="top:246px">1,330</div><div class="txt" style="left:1147px;top:281px;font-size:17px;-webkit-text-stroke:.2px #00007c;color:#00007c">R</div><div class="ibox" style="top:278px">3,058</div><div class="txt" style="left:1141px;top:317px;font-size:16px;letter-spacing:0px;color:#aca899;-webkit-text-stroke:.25px #aca899;">ROI 1 (um)</div><div class="txt" style="left:1147px;top:343px;font-size:17px;-webkit-text-stroke:.2px #aca899;color:#aca899">X</div><div class="ibox" style="top:340px"></div><div class="txt" style="left:1147px;top:375px;font-size:17px;-webkit-text-stroke:.2px #aca899;color:#aca899">Y</div><div class="ibox" style="top:372px"></div><div class="txt" style="left:1147px;top:407px;font-size:17px;-webkit-text-stroke:.2px #aca899;color:#aca899">R</div><div class="ibox" style="top:404px"></div><div class="txt" style="left:1141px;top:443px;font-size:16px;letter-spacing:0px;color:#aca899;-webkit-text-stroke:.25px #aca899;">ROI 2 (um)</div><div class="txt" style="left:1147px;top:471px;font-size:17px;-webkit-text-stroke:.2px #aca899;color:#aca899">X</div><div class="ibox" style="top:468px"></div><div class="txt" style="left:1147px;top:503px;font-size:17px;-webkit-text-stroke:.2px #aca899;color:#aca899">Y</div><div class="ibox" style="top:500px"></div><div class="txt" style="left:1147px;top:535px;font-size:17px;-webkit-text-stroke:.2px #aca899;color:#aca899">R</div><div class="ibox" style="top:532px"></div>
<div class="abs" style="left:38px;top:818px;width:896px;height:168px;background:#fff"></div><svg class="abs" style="left:0;top:0" width="1278" height="1022"><path d="M38 852.5H934" stroke="#b050a0" stroke-width="1" stroke-dasharray="1 2" shape-rendering="crispEdges"/><path d="M38 902.5H934" stroke="#58b078" stroke-width="1" stroke-dasharray="1 2" shape-rendering="crispEdges"/><path d="M38 963.5H934" stroke="#202020" stroke-width="1" stroke-dasharray="1 2" shape-rendering="crispEdges"/><path d="M37.500 818V986M37 985.500H934" stroke="#000" shape-rendering="crispEdges"/><path d="M34 818.5h4" stroke="#000" shape-rendering="crispEdges"/><path d="M34 852.5h4" stroke="#000" shape-rendering="crispEdges"/><path d="M34 885.5h4" stroke="#000" shape-rendering="crispEdges"/><path d="M34 919.5h4" stroke="#000" shape-rendering="crispEdges"/><path d="M34 952.5h4" stroke="#000" shape-rendering="crispEdges"/><path d="M34 986.5h4" stroke="#000" shape-rendering="crispEdges"/><path d="M167.5 976v10" stroke="#000" shape-rendering="crispEdges"/><path d="M435.5 976v10" stroke="#000" shape-rendering="crispEdges"/><path d="M705.5 976v10" stroke="#000" shape-rendering="crispEdges"/><path d="M38.0 985.5L40.0 985.5L42.0 985.5L44.0 985.5L46.0 985.5L48.0 985.5L50.0 985.5L52.0 985.5L54.0 985.5L56.0 985.5L58.0 985.5L60.0 985.5L62.0 985.5L64.0 985.5L66.0 985.5L68.0 985.5L70.0 985.5L72.0 985.5L74.0 985.5L76.0 985.5L78.0 985.5L80.0 985.5L82.0 985.5L84.0 985.5L86.0 985.5L88.0 985.5L90.0 985.5L92.0 985.5L94.0 985.5L96.0 985.5L98.0 985.5L100.0 985.5L102.0 985.5L104.0 985.5L106.0 985.5L108.0 985.5L110.0 985.5L112.0 985.5L114.0 985.5L116.0 985.5L118.0 985.5L120.0 985.5L122.0 985.5L124.0 985.5L126.0 985.5L128.0 985.5L130.0 985.5L132.0 985.5L134.0 985.5L136.0 985.5L138.0 985.5L140.0 985.5L142.0 985.5L144.0 985.5L146.0 985.5L148.0 985.5L150.0 985.5L152.0 985.5L154.0 985.5L156.0 985.5L158.0 985.5L160.0 985.5L162.0 985.5L164.0 985.5L166.0 985.5L168.0 985.5L170.0 985.5L172.0 985.5L174.0 985.5L176.0 985.5L178.0 985.5L180.0 985.5L182.0 985.5L184.0 985.5L186.0 985.5L188.0 985.5L190.0 985.5L192.0 985.5L194.0 985.5L196.0 985.5L198.0 985.5L200.0 985.5L202.0 985.5L204.0 985.5L206.0 985.5L208.0 985.5L210.0 985.5L212.0 985.5L214.0 985.5L216.0 985.5L218.0 985.5L220.0 985.5L222.0 985.5L224.0 985.5L226.0 985.5L228.0 985.5L230.0 985.5L232.0 985.5L234.0 985.5L236.0 985.5L238.0 985.5L240.0 985.5L242.0 985.5L244.0 985.5L246.0 985.5L248.0 985.5L250.0 985.5L252.0 985.5L254.0 985.5L256.0 985.5L258.0 985.5L260.0 985.5L262.0 985.5L264.0 985.5L266.0 985.5L268.0 985.5L270.0 985.5L272.0 985.5L274.0 985.5L276.0 985.5L278.0 985.5L280.0 985.5L282.0 985.5L284.0 985.5L286.0 985.5L288.0 985.5L290.0 985.5L292.0 985.5L294.0 985.5L296.0 985.5L298.0 985.5L300.0 985.5L302.0 985.5L304.0 985.5L306.0 985.5L308.0 985.5L310.0 985.5L312.0 985.5L314.0 985.5L316.0 985.5L318.0 985.5L320.0 985.5L322.0 985.5L324.0 985.5L326.0 985.5L328.0 985.5L330.0 985.5L332.0 985.5L334.0 985.5L336.0 985.4L338.0 985.4L340.0 985.4L342.0 985.4L344.0 985.4L346.0 985.4L348.0 985.4L350.0 985.3L352.0 985.3L354.0 985.3L356.0 985.2L358.0 985.2L360.0 985.2L362.0 985.1L364.0 985.0L366.0 985.0L368.0 984.9L370.0 984.8L372.0 984.7L374.0 984.6L376.0 984.4L378.0 984.3L380.0 984.1L382.0 983.9L384.0 983.7L386.0 983.5L388.0 983.2L390.0 982.9L392.0 982.6L394.0 982.2L396.0 981.8L398.0 981.4L400.0 980.9L402.0 980.3L404.0 979.7L406.0 979.1L408.0 978.4L410.0 977.6L412.0 976.7L414.0 975.8L416.0 974.8L418.0 973.7L420.0 972.5L422.0 971.2L424.0 969.8L426.0 968.4L428.0 966.8L430.0 965.1L432.0 963.3L434.0 961.3L436.0 959.3L438.0 957.1L440.0 954.8L442.0 952.4L444.0 949.8L446.0 947.2L448.0 944.3L450.0 941.4L452.0 938.3L454.0 935.1L456.0 931.8L458.0 928.3L460.0 924.8L462.0 921.1L464.0 917.4L466.0 913.5L468.0 909.5L470.0 905.5L472.0 901.4L474.0 897.3L476.0 893.1L478.0 888.9L480.0 884.6L482.0 880.4L484.0 876.2L486.0 872.0L488.0 867.8L490.0 863.7L492.0 859.7L494.0 855.8L496.0 852.0L498.0 848.4L500.0 844.8L502.0 841.5L504.0 838.3L506.0 835.3L508.0 832.5L510.0 829.9L512.0 827.6L514.0 825.5L516.0 823.7L518.0 822.1L520.0 820.8L522.0 819.8L524.0 819.1L526.0 818.6L528.0 818.5L530.0 818.6L532.0 819.1L534.0 819.8L536.0 820.8L538.0 822.1L540.0 823.7L542.0 825.5L544.0 827.6L546.0 829.9L548.0 832.5L550.0 835.3L552.0 838.3L554.0 841.5L556.0 844.8L558.0 848.4L560.0 852.0L562.0 855.8L564.0 859.7L566.0 863.7L568.0 867.8L570.0 872.0L572.0 876.2L574.0 880.4L576.0 884.6L578.0 888.9L580.0 893.1L582.0 897.3L584.0 901.4L586.0 905.5L588.0 909.5L590.0 913.5L592.0 917.4L594.0 921.1L596.0 924.8L598.0 928.3L600.0 931.8L602.0 935.1L604.0 938.3L606.0 941.4L608.0 944.3L610.0 947.2L612.0 949.8L614.0 952.4L616.0 954.8L618.0 957.1L620.0 959.3L622.0 961.3L624.0 963.3L626.0 965.1L628.0 966.8L630.0 968.4L632.0 969.8L634.0 971.2L636.0 972.5L638.0 973.7L640.0 974.8L642.0 975.8L644.0 976.7L646.0 977.6L648.0 978.4L650.0 979.1L652.0 979.7L654.0 980.3L656.0 980.9L658.0 981.4L660.0 981.8L662.0 982.2L664.0 982.6L666.0 982.9L668.0 983.2L670.0 983.5L672.0 983.7L674.0 983.9L676.0 984.1L678.0 984.3L680.0 984.4L682.0 984.6L684.0 984.7L686.0 984.8L688.0 984.9L690.0 985.0L692.0 985.0L694.0 985.1L696.0 985.2L698.0 985.2L700.0 985.2L702.0 985.3L704.0 985.3L706.0 985.3L708.0 985.4L710.0 985.4L712.0 985.4L714.0 985.4L716.0 985.4L718.0 985.4L720.0 985.4L722.0 985.5L724.0 985.5L726.0 985.5L728.0 985.5L730.0 985.5L732.0 985.5L734.0 985.5L736.0 985.5L738.0 985.5L740.0 985.5L742.0 985.5L744.0 985.5L746.0 985.5L748.0 985.5L750.0 985.5L752.0 985.5L754.0 985.5L756.0 985.5L758.0 985.5L760.0 985.5L762.0 985.5L764.0 985.5L766.0 985.5L768.0 985.5L770.0 985.5L772.0 985.5L774.0 985.5L776.0 985.5L778.0 985.5L780.0 985.5L782.0 985.5L784.0 985.5L786.0 985.5L788.0 985.5L790.0 985.5L792.0 985.5L794.0 985.5L796.0 985.5L798.0 985.5L800.0 985.5L802.0 985.5L804.0 985.5L806.0 985.5L808.0 985.5L810.0 985.5L812.0 985.5L814.0 985.5L816.0 985.5L818.0 985.5L820.0 985.5L822.0 985.5L824.0 985.5L826.0 985.5L828.0 985.5L830.0 985.5L832.0 985.5L834.0 985.5L836.0 985.5L838.0 985.5L840.0 985.5L842.0 985.5L844.0 985.5L846.0 985.5L848.0 985.5L850.0 985.5L852.0 985.5L854.0 985.5L856.0 985.5L858.0 985.5L860.0 985.5L862.0 985.5L864.0 985.5L866.0 985.5L868.0 985.5L870.0 985.5L872.0 985.5L874.0 985.5L876.0 985.5L878.0 985.5L880.0 985.5L882.0 985.5L884.0 985.5L886.0 985.5L888.0 985.5L890.0 985.5L892.0 985.5L894.0 985.5L896.0 985.5L898.0 985.5L900.0 985.5L902.0 985.5L904.0 985.5L906.0 985.5L908.0 985.5L910.0 985.5L912.0 985.5L914.0 985.5L916.0 985.5L918.0 985.5L920.0 985.5L922.0 985.5L924.0 985.5L926.0 985.5L928.0 985.5L930.0 985.5L932.0 985.5L934.0 985.5" fill="none" stroke="#b83880" stroke-width="1.100"/><path d="M38.0 985.0L245.0 985.0L300.0 982.8L365.7 977.5L398.6 968.7L422.0 964.0L434.6 959.4L450.0 945.3L459.6 929.6L468.0 915.0L478.4 915.0L487.8 889.0L497.0 870.0L506.6 835.7L517.5 832.6L527.0 818.5L537.9 826.3L547.3 823.2L556.6 843.5L566.0 854.5L577.0 895.0L588.0 911.5L598.0 911.5L606.7 940.6L616.0 950.0L627.0 963.4L644.3 970.3L675.6 977.5L705.0 981.0L745.0 983.5L765.0 984.8L785.0 985.0L934.0 985.0" fill="none" stroke="#000" stroke-width="1.100"/></svg><div class="ax" style="left:5.5px;top:813px;width:30px;text-align:center">100</div><div class="ax" style="left:6.5px;top:846px;width:30px;text-align:center">80</div><div class="ax" style="left:6.5px;top:880px;width:30px;text-align:center">60</div><div class="ax" style="left:6.5px;top:913px;width:30px;text-align:center">40</div><div class="ax" style="left:6.5px;top:946px;width:30px;text-align:center">20</div><div class="ax" style="left:6.5px;top:976px;width:30px;text-align:center">0</div>
<div class="etch" style="left:950px;top:824px;width:318px;height:162px"></div><div class="lab" style="left:952px;top:830px;width:140px;text-align:center;color:#000">Horizontal</div><div class="lab" style="left:959px;top:844px;width:140px;text-align:center;color:#000">Width  (um)</div><div class="lab" style="left:1112px;top:830px;width:140px;text-align:center;color:#000">Vertical</div><div class="lab" style="left:1120px;top:844px;width:140px;text-align:center;color:#000">Width  (um)</div><div class="lab" style="left:920px;top:866px;width:140px;text-align:center;color:#000">Beam</div><div class="lab" style="left:983px;top:866px;width:140px;text-align:center;color:#800000">Gauss</div><div class="lab" style="left:1092px;top:866px;width:140px;text-align:center;color:#000">Beam</div><div class="lab" style="left:1154px;top:866px;width:140px;text-align:center;color:#800000">Gauss</div><div class="vb" style="left:958px;top:885px">0,464</div><div class="vb g" style="left:1022px;top:885px">0,482</div><div class="vb" style="left:1132px;top:885px">0,494</div><div class="vb g" style="left:1196px;top:885px">0,478</div><div class="txt" style="left:1090px;top:887px;font-family:'Liberation Serif',serif;font-size:13.5px;color:#000">80,0%</div><div class="vb" style="left:958px;top:909px">0,753</div><div class="vb g" style="left:1022px;top:909px">0,850</div><div class="vb" style="left:1132px;top:909px">0,824</div><div class="vb g" style="left:1196px;top:909px">0,843</div><div class="txt" style="left:1090px;top:911px;font-family:'Liberation Serif',serif;font-size:13.5px;color:#000">50,0%</div><div class="vb" style="left:958px;top:933px">1,541</div><div class="vb g" style="left:1022px;top:933px">1,445</div><div class="vb" style="left:1132px;top:933px">1,417</div><div class="vb g" style="left:1196px;top:933px">1,432</div><div class="txt" style="left:1090px;top:935px;font-family:'Liberation Serif',serif;font-size:13.5px;color:#000">13,5%</div><div class="vb" style="left:990px;top:957px;padding-right:13px">87,38</div><div class="vb" style="left:1162px;top:957px;padding-right:12.5px">86,58</div><div class="lab" style="left:1061px;top:958px">Correlation (%)</div>
<div class="sp" style="left:4px;width:160px;border-left-color:transparent"></div><div class="txt" style="left:4px;top:1004px;width:160px;text-align:center;font-size:10px;letter-spacing:.4px;color:#000">23/08/2012 13:29:21</div><div class="sp" style="left:166px;width:118px"></div><div class="txt" style="left:166px;top:1004px;width:118px;text-align:center;font-size:10px;letter-spacing:.4px;color:#000">Average: 5</div><div class="sp" style="left:287px;width:219px"></div><div class="txt" style="left:287px;top:1004px;width:219px;text-align:center;font-size:10px;letter-spacing:.4px;color:#000">Zoom: 800%  Scale: 0,63 um/div</div><div class="sp" style="left:508px;width:158px"></div><div class="txt" style="left:508px;top:1004px;width:158px;text-align:center;font-size:10px;letter-spacing:.4px;color:#000">Profiles: Sum</div>
</div></body></html>
